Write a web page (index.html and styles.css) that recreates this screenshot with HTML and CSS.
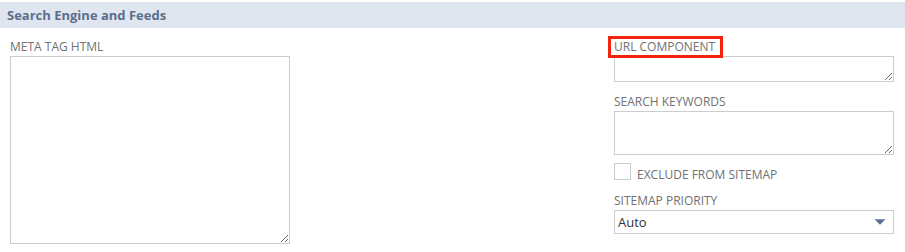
FILE: index.html
```html
<!DOCTYPE html>
<html>
<head>
<meta charset="utf-8">
<link rel="stylesheet" href="styles.css">
</head>
<body>
<div class="section-head">Search Engine and Feeds</div>
<div class="columns">
  <div class="col">
    <div class="field">
      <div class="label">META TAG HTML</div>
      <textarea class="ta ta-big"></textarea>
    </div>
  </div>
  <div class="col">
    <div class="field field-hl">
      <div class="label">URL COMPONENT</div>
      <span class="highlight"></span>
      <textarea class="ta ta-url"></textarea>
    </div>
    <div class="field field-next">
      <div class="label">SEARCH KEYWORDS</div>
      <textarea class="ta ta-kw"></textarea>
    </div>
    <div class="check-row">
      <span class="checkbox"></span>
      <span class="check-label">EXCLUDE FROM SITEMAP</span>
    </div>
    <div class="field field-select">
      <div class="label">SITEMAP PRIORITY</div>
      <div class="select">
        <span class="select-value">Auto</span>
        <svg class="arrow" width="12" height="6" viewBox="0 0 12 6"><path d="M0.5 0.3 L11.5 0.3 L6 5.7 Z" fill="#5b7090"/></svg>
      </div>
    </div>
  </div>
</div>
</body>
</html>
```
FILE: styles.css
```css
html, body {
  margin: 0;
  padding: 0;
  background: #ffffff;
}
body {
  font-family: "Open Sans", "DejaVu Sans", sans-serif;
}
.section-head {
  margin-top: 2px;
  height: 26px;
  line-height: 26px;
  padding-left: 7px;
  background: #e0e6ef;
  color: #5a6e8d;
  font-size: 13px;
  font-weight: 700;
}
.columns {
  display: grid;
  grid-template-columns: 280px 280px;
  justify-content: space-between;
  padding: 10px 11px 0 10px;
}
.col {
  display: flex;
  flex-direction: column;
}
.field {
  display: flex;
  flex-direction: column;
}
.field-hl {
  position: relative;
}
.field-next {
  margin-top: 11px;
}
.label {
  font-size: 12px;
  line-height: 18px;
  height: 18px;
  color: #717171;
  white-space: nowrap;
}
.highlight {
  position: absolute;
  left: -6px;
  top: -2px;
  width: 115px;
  height: 22px;
  box-sizing: border-box;
  border: 3px solid #f2230f;
}
.ta {
  display: block;
  box-sizing: border-box;
  width: 280px;
  margin: 0;
  border: 1px solid #cccccc;
  border-radius: 0;
  background: #ffffff;
  font-family: "Open Sans", sans-serif;
  font-size: 13px;
  outline: none;
  resize: both;
}
.ta-big { height: 188px; }
.ta-url { height: 26px; }
.ta-kw { height: 44px; }
.check-row {
  display: flex;
  align-items: flex-start;
  gap: 6px;
  margin-top: 8px;
}
.checkbox {
  display: block;
  box-sizing: border-box;
  width: 17px;
  height: 17px;
  border: 1px solid #cccccc;
  background: #ffffff;
}
.check-label {
  margin-top: 6px;
  font-size: 12px;
  line-height: 12px;
  color: #717171;
  white-space: nowrap;
}
.field-select {
  margin-top: 11px;
}
.select {
  display: flex;
  align-items: center;
  box-sizing: border-box;
  width: 280px;
  height: 24px;
  border: 1px solid #cccccc;
  background: #ffffff;
  padding: 0 7px 0 3px;
}
.select-value {
  font-size: 13px;
  line-height: 22px;
  color: #333333;
}
.arrow {
  display: block;
  margin-left: auto;
}
```
